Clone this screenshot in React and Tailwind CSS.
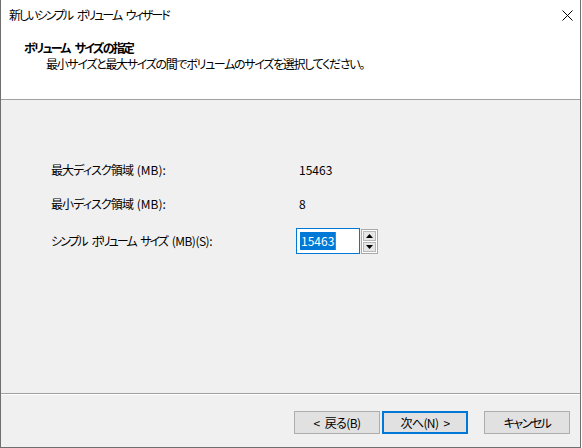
export default function App() {
  const font = "[font-family:'Noto_Sans_CJK_JP','Noto_Sans',sans-serif] [font-feature-settings:'palt']";
  return (
    <div className={`h-[448px] w-[582px] bg-white text-[12px] leading-[16px] text-black ${font}`}>
      <div className="flex h-[448px] w-[581px] flex-col border-b border-l border-r border-[#6f6f6f]">
        {/* title bar + header */}
        <div className="relative h-[99px] bg-white">
          <div className="pl-[8px] pt-[7px] tracking-[-2px] [word-spacing:4px]">新しいシンプル ボリューム ウィザード</div>
          <svg className="absolute left-[561px] top-[10px]" width="11" height="11" viewBox="0 0 11 11">
            <path d="M0.5 0.5 L10.5 10.5 M10.5 0.5 L0.5 10.5" stroke="#000" strokeWidth="1" fill="none" />
          </svg>
          <div className="pl-[23px] pt-[17px] font-bold tracking-[-1.8px] [word-spacing:4px]">ボリューム サイズの指定</div>
          <div className="pl-[45px] tracking-[-1.3px]">最小サイズと最大サイズの間でボリュームのサイズを選択してください。</div>
        </div>
        <div className="h-px bg-[#a0a0a0]" />

        {/* body */}
        <div className="flex flex-1 flex-col gap-[14px] bg-[#f0f0f0] pl-[50px] pt-[60px]">
          <div className="flex h-[20px] items-center">
            <span className="w-[248px]">
              <span className="tracking-[-0.9px]">最大ディスク領域</span>
              <span className="[word-spacing:1px]"> (MB):</span>
            </span>
            <span>15463</span>
          </div>
          <div className="flex h-[20px] items-center">
            <span className="w-[248px]">
              <span className="tracking-[-0.9px]">最小ディスク領域</span>
              <span className="[word-spacing:1px]"> (MB):</span>
            </span>
            <span>8</span>
          </div>
          <div className="flex h-[26px] items-center">
            <span className="w-[245px]">
              <span className="tracking-[-2px] [word-spacing:4px]">シンプル ボリューム サイズ </span>
              <span className="tracking-[-0.5px]">(MB)(S):</span>
            </span>
            <div className="flex h-[26px] w-[64px] items-center border border-[#0078d7] bg-white pl-[3px]">
              <span className="bg-[#0078d7] px-px leading-[18px] text-white">15463</span>
              <span className="h-[18px] w-px bg-[#e06000]" />
            </div>
            <div className="ml-px flex h-[25px] w-[17px] flex-col gap-px border border-[#a9a9a9] bg-white p-px">
              <div className="flex flex-1 items-center justify-center border border-[#b8b8b8] bg-[#e6e6e6]">
                <svg width="7" height="4" viewBox="0 0 7 4"><path d="M3.5 0 L7 4 L0 4 Z" fill="#000" /></svg>
              </div>
              <div className="flex flex-1 items-center justify-center border border-[#b8b8b8] bg-[#e6e6e6]">
                <svg width="7" height="4" viewBox="0 0 7 4"><path d="M0 0 L7 0 L3.5 4 Z" fill="#000" /></svg>
              </div>
            </div>
          </div>
        </div>

        {/* footer */}
        <div className="h-px bg-[#a0a0a0]" />
        <div className="h-px bg-white" />
        <div className="flex h-[52px] items-start gap-[2px] bg-[#f0f0f0] pl-[293px] pt-[16px]">
          <button className="flex h-[23px] w-[86px] items-center justify-center border border-[#adadad] bg-[#e1e1e1] tracking-[-0.6px] [word-spacing:3px]">&lt; 戻る(B)</button>
          <button className="flex h-[23px] w-[86px] items-center justify-center border-2 border-[#0078d7] bg-[#e1e1e1] tracking-[-0.6px] [word-spacing:3px]">次へ(N) &gt;</button>
          <button className="ml-[14px] flex h-[23px] w-[86px] items-center justify-center border border-[#adadad] bg-[#e1e1e1] tracking-[-1.5px]">キャンセル</button>
        </div>
      </div>
    </div>
  );
}
